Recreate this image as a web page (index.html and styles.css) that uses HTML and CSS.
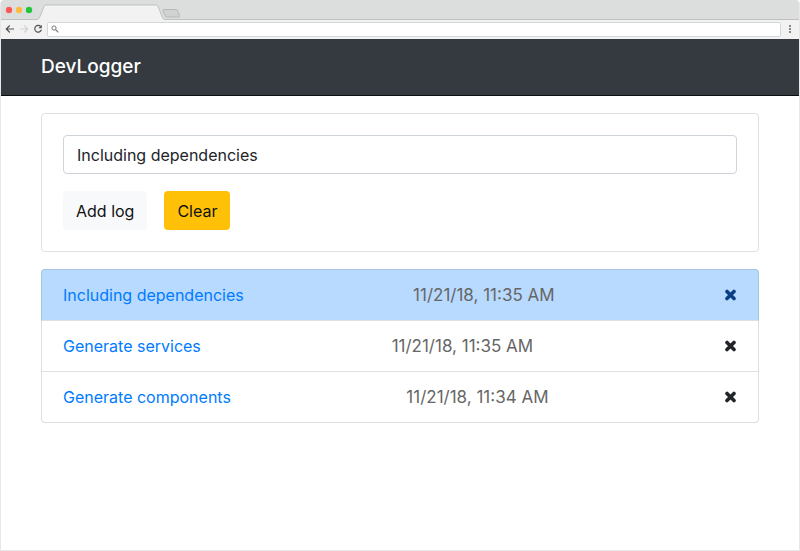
FILE: index.html
```html
<!DOCTYPE html>
<html lang="en">
<head>
<meta charset="utf-8">
<title>DevLogger</title>
<link rel="stylesheet" href="styles.css">
</head>
<body>
<div class="window">
  <div class="chrome">
    <div class="tabbar">
      <div class="lights"><span class="light red"></span><span class="light yellow"></span><span class="light green"></span></div>
      <svg class="tabs" width="144" height="20" viewBox="0 0 144 20" aria-hidden="true">
        <path d="M0 19.5C1.500 19.500 2 18.500 2.500 17.500L7 6.500Q7.700 5 9 5H119Q120.500 5 121 6.500L125.500 17.500Q126.200 19.500 128 19.500V20H0Z" fill="#f2f2f2"/>
        <path d="M0 19.500C1.500 19.500 2 18.500 2.500 17.500L7 6.500Q7.700 5 9 5H119Q120.500 5 121 6.500L125.500 17.500Q126.200 19.500 128 19.500H144" fill="none" stroke="#bfc1c1"/>
        <path d="M126.500 9.500H139Q140 9.500 140.500 10.500L142.500 15.500Q143 17 141.500 17H130Q128.700 17 128.200 16L126 10.500Q125.700 9.500 126.500 9.500Z" fill="#d0d2d2" stroke="#b6b8b8"/>
      </svg>
    </div>
    <div class="toolbar">
      <button class="tool" aria-label="Back"><svg width="10" height="10" viewBox="0 0 10 10"><path d="M9 5H1.500M4.800 1.500L1.300 5L4.800 8.500" fill="none" stroke="#555" stroke-width="1.200"/></svg></button>
      <button class="tool" aria-label="Forward"><svg width="10" height="10" viewBox="0 0 10 10"><path d="M1 5H8.500M5.200 1.500L8.700 5L5.200 8.500" fill="none" stroke="#d2d2d2" stroke-width="1.200"/></svg></button>
      <button class="tool" aria-label="Reload"><svg width="10" height="10" viewBox="0 0 10 10"><path d="M7.800 2.600A3.400 3.400 0 1 0 8.400 5.800" fill="none" stroke="#555" stroke-width="1.200"/><path d="M8.800 .8V4.300H5.300Z" fill="#555"/></svg></button>
      <label class="address">
        <svg width="8" height="8" viewBox="0 0 8 8" aria-hidden="true"><circle cx="3" cy="3" r="2.100" fill="none" stroke="#777"/><path d="M4.600 4.600L7.300 7.300" stroke="#777" stroke-width="1.200"/></svg>
        <input class="url" type="text" aria-label="Address">
      </label>
      <button class="menu" aria-label="Menu"><svg width="4" height="8" viewBox="0 0 4 8"><path d="M1 0H3V2H1ZM1 3H3V5H1ZM1 6H3V8H1Z" fill="#888"/></svg></button>
    </div>
  </div>
  <nav class="navbar"><a class="brand" href="#">DevLogger</a></nav>
  <main class="container">
    <form class="card">
      <input class="log-text" type="text" aria-label="Log" value="Including dependencies">
      <div class="actions">
        <button class="btn light-btn" type="button">Add log</button>
        <button class="btn warning-btn" type="button">Clear</button>
      </div>
    </form>
    <ul class="list">
      <li class="item active">
        <a class="name" href="#">Including dependencies</a>
        <span class="date">11/21/18, 11:35 AM</span>
        <button class="remove" aria-label="Remove"><svg width="13" height="12" viewBox="0 0 13 12"><path d="M3 2.500L10 9.500M10 2.500L3 9.500" stroke="currentColor" stroke-width="3.600" stroke-linecap="round"/></svg></button>
      </li>
      <li class="item">
        <a class="name" href="#">Generate services</a>
        <span class="date">11/21/18, 11:35 AM</span>
        <button class="remove" aria-label="Remove"><svg width="13" height="12" viewBox="0 0 13 12"><path d="M3 2.500L10 9.500M10 2.500L3 9.500" stroke="currentColor" stroke-width="3.600" stroke-linecap="round"/></svg></button>
      </li>
      <li class="item">
        <a class="name" href="#">Generate components</a>
        <span class="date">11/21/18, 11:34 AM</span>
        <button class="remove" aria-label="Remove"><svg width="13" height="12" viewBox="0 0 13 12"><path d="M3 2.500L10 9.500M10 2.500L3 9.500" stroke="currentColor" stroke-width="3.600" stroke-linecap="round"/></svg></button>
      </li>
    </ul>
  </main>
</div>
</body>
</html>
```
FILE: styles.css
```css
* { box-sizing: border-box; }
body {
  margin: 0;
  background: #fff;
  color: #212529;
  font: 16px/24px Inter, "Liberation Sans", sans-serif;
}
button, input { font: inherit; color: inherit; }
button { padding: 0; border: 0; background: none; }
svg { display: block; }
.window {
  min-height: 100vh;
  border: 1px solid #e8e8e8;
  border-top: 0;
  border-radius: 4px 4px 0 0;
  overflow: hidden;
}
.chrome { background: #f2f2f2; }
.tabbar {
  display: flex;
  height: 20px;
  background: #dcdedd linear-gradient(#bfc1c1, #bfc1c1) bottom / 100% 1px no-repeat;
}
.lights {
  display: flex;
  gap: 4px;
  padding: 7px 0 0 5px;
  width: 36px;
}
.light { width: 6px; height: 6px; border-radius: 50%; box-shadow: 0 0 1px currentColor; }
.red { background: #fc5753; color: #fc5753; }
.yellow { background: #fdbc40; color: #fdbc40; }
.green { background: #1fc53a; color: #1fc53a; }
.toolbar {
  display: flex;
  align-items: center;
  height: 19px;
  padding: 0 7px 1px 4px;
}
.tool { margin-right: 4px; }
.address {
  display: flex;
  flex: 1;
  align-items: center;
  gap: 4px;
  height: 15px;
  margin-right: 7px;
  padding: 0 3px;
  border: 1px solid #d5d7d7;
  border-radius: 2px;
  background: #fff;
}
.url { flex: 1; min-width: 0; height: 11px; padding: 0; border: 0; background: none; font-size: 9px; outline: 0; }
.navbar {
  display: flex;
  align-items: center;
  height: 57px;
  padding: 0 40px;
  background: #343a40;
  border-bottom: 1px solid #0c0e10;
}
.brand { color: #fff; font-size: 19px; font-weight: 500; text-decoration: none; }
.container { padding: 17px 40px; }
.card {
  padding: 21px;
  border: 1px solid #dfdfdf;
  border-radius: 4px;
}
.log-text {
  display: block;
  width: 100%;
  height: 39px;
  padding: 0 13px;
  border: 1px solid #ced4da;
  border-radius: 4px;
  background: #fff;
}
.actions { display: flex; gap: 17px; margin-top: 17px; }
.btn { height: 39px; padding: 0 13px; border-radius: 4px; color: #111; }
.light-btn { background: #f8f9fa; }
.warning-btn { background: #ffc107; }
.list {
  margin: 17px 0 0;
  padding: 0;
  list-style: none;
}
.item {
  display: flex;
  align-items: center;
  justify-content: space-between;
  height: 51px;
  padding: 0 21px;
  border: 1px solid #dfdfdf;
  border-top: 0;
}
.item:last-child { border-radius: 0 0 4px 4px; }
.active {
  height: 52px;
  border-top: 1px solid #a7c4e2;
  border-left-color: #a7c4e2;
  border-right-color: #a7c4e2;
  border-radius: 4px 4px 0 0;
  background: #b8daff;
}
.name { color: #007bff; text-decoration: none; }
.date { color: #666; font-size: 17px; }
.remove { color: #212529; }
.active .remove { color: #0a3f86; }
```
